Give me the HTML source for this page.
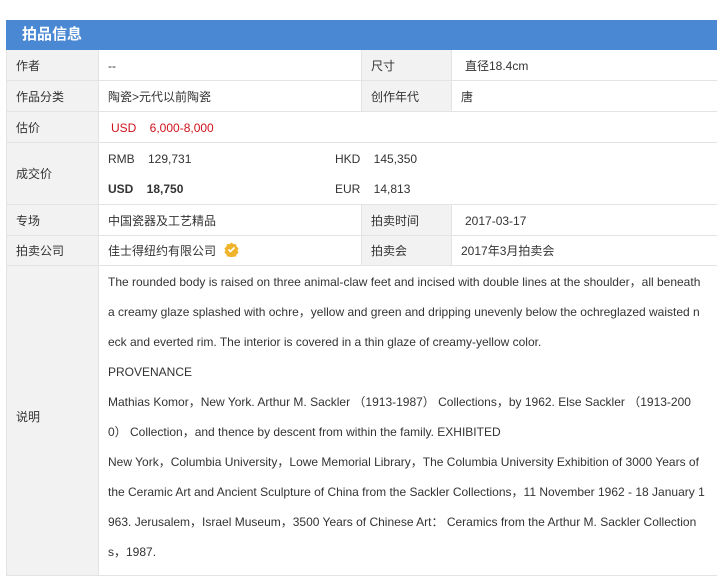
<!DOCTYPE html>
<html><head><meta charset="utf-8"><style>
body{margin:0;width:717px;height:566px;overflow:hidden;background:#fff;font-family:"Liberation Sans","Noto Sans CJK SC",sans-serif;font-size:12px;color:#333;position:relative}
.a{position:absolute;box-sizing:border-box}
.h{left:6px;top:20px;width:711px;height:30px;background:#4a88d4;color:#fff;font-weight:bold;font-size:15px;line-height:30px;padding-left:16px}
.l{background:#f2f2f2;border-bottom:1px solid #e3e3e3;border-left:1px solid #e3e3e3}
.v{border-bottom:1px solid #e3e3e3;border-left:1px solid #e3e3e3}
.t{position:absolute;white-space:nowrap;line-height:14px}
.d{position:absolute;left:108px;width:600px;line-height:30px;font-size:12px;white-space:nowrap}
</style></head><body>
<div class="a h">拍品信息</div>
<div class="a l" style="left:6px;top:50px;width:92px;height:31px"></div>
<div class="a v" style="left:98px;top:50px;width:263px;height:31px"></div>
<div class="a l" style="left:361px;top:50px;width:90px;height:31px"></div>
<div class="a v" style="left:451px;top:50px;width:266px;height:31px"></div>
<div class="a l" style="left:6px;top:81px;width:92px;height:31px"></div>
<div class="a v" style="left:98px;top:81px;width:263px;height:31px"></div>
<div class="a l" style="left:361px;top:81px;width:90px;height:31px"></div>
<div class="a v" style="left:451px;top:81px;width:266px;height:31px"></div>
<div class="a l" style="left:6px;top:112px;width:92px;height:31px"></div>
<div class="a v" style="left:98px;top:112px;width:619px;height:31px"></div>
<div class="a l" style="left:6px;top:143px;width:92px;height:62px"></div>
<div class="a v" style="left:98px;top:143px;width:619px;height:62px"></div>
<div class="a l" style="left:6px;top:205px;width:92px;height:31px"></div>
<div class="a v" style="left:98px;top:205px;width:263px;height:31px"></div>
<div class="a l" style="left:361px;top:205px;width:90px;height:31px"></div>
<div class="a v" style="left:451px;top:205px;width:266px;height:31px"></div>
<div class="a l" style="left:6px;top:236px;width:92px;height:30px"></div>
<div class="a v" style="left:98px;top:236px;width:263px;height:30px"></div>
<div class="a l" style="left:361px;top:236px;width:90px;height:30px"></div>
<div class="a v" style="left:451px;top:236px;width:266px;height:30px"></div>
<div class="a l" style="left:6px;top:266px;width:92px;height:310px"></div>
<div class="a v" style="left:98px;top:266px;width:619px;height:310px"></div>

<div class="t" style="left:16px;top:59px">作者</div>
<div class="t" style="left:108px;top:59px">--</div>
<div class="t" style="left:371px;top:59px">尺寸</div>
<div class="t" style="left:465px;top:59px">直径18.4cm</div>
<div class="t" style="left:16px;top:90px">作品分类</div>
<div class="t" style="left:108px;top:90px">陶瓷&gt;元代以前陶瓷</div>
<div class="t" style="left:371px;top:90px">创作年代</div>
<div class="t" style="left:461px;top:90px">唐</div>
<div class="t" style="left:16px;top:121px">估价</div>
<div class="t" style="left:111px;top:121px;color:#d0121b">USD&nbsp;&nbsp;&nbsp;&nbsp;6,000-8,000</div>
<div class="t" style="left:16px;top:167px">成交价</div>
<div class="t" style="left:108px;top:152px">RMB&nbsp;&nbsp;&nbsp;&nbsp;129,731</div>
<div class="t" style="left:335px;top:152px">HKD&nbsp;&nbsp;&nbsp;&nbsp;145,350</div>
<div class="t" style="left:108px;top:182px;font-weight:bold">USD&nbsp;&nbsp;&nbsp;&nbsp;18,750</div>
<div class="t" style="left:335px;top:182px">EUR&nbsp;&nbsp;&nbsp;&nbsp;14,813</div>
<div class="t" style="left:16px;top:214px">专场</div>
<div class="t" style="left:108px;top:214px">中国瓷器及工艺精品</div>
<div class="t" style="left:371px;top:214px">拍卖时间</div>
<div class="t" style="left:465px;top:214px">2017-03-17</div>
<div class="t" style="left:16px;top:244px">拍卖公司</div>
<div class="t" style="left:108px;top:244px">佳士得纽约有限公司</div>
<svg class="a" style="left:224px;top:242px" width="15" height="15" viewBox="0 0 15 15"><path d="M7.5 0.5l2 1.6 2.5 0 .6 2.5 2 1.6-1 2.3 1 2.3-2 1.4-.6 2.3-2.5.1-2 1.4-2-1.4-2.5-.1-.6-2.3-2-1.4 1-2.3-1-2.3 2-1.6.6-2.5 2.5 0z" fill="#f0b42a"/><path d="M4.5 7.5l2 2 4-4" stroke="#fff" stroke-width="1.6" fill="none"/></svg>
<div class="t" style="left:371px;top:244px">拍卖会</div>
<div class="t" style="left:461px;top:244px">2017年3月拍卖会</div>
<div class="t" style="left:16px;top:410px">说明</div>
<div class="d" style="top:267px">The rounded body is raised on three animal-claw feet and incised with double lines at the shoulder，all beneath<br>a creamy glaze splashed with ochre，yellow and green and dripping unevenly below the ochreglazed waisted n<br>eck and everted rim. The interior is covered in a thin glaze of creamy-yellow color.<br>PROVENANCE<br>Mathias Komor，New York. Arthur M. Sackler （1913-1987） Collections，by 1962. Else Sackler （1913-200<br>0） Collection，and thence by descent from within the family. EXHIBITED<br>New York，Columbia University，Lowe Memorial Library，The Columbia University Exhibition of 3000 Years of<br>the Ceramic Art and Ancient Sculpture of China from the Sackler Collections，11 November 1962 - 18 January 1<br>963. Jerusalem，Israel Museum，3500 Years of Chinese Art： Ceramics from the Arthur M. Sackler Collection<br>s，1987.</div>
</body></html>
